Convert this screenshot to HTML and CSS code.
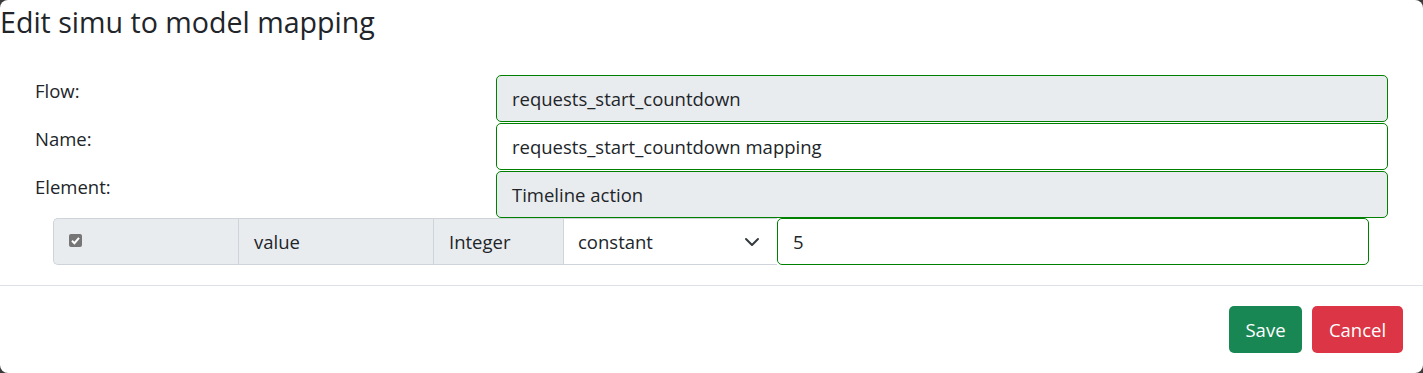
FILE: index.html
```html
<!DOCTYPE html>
<html>
<head>
<meta charset="utf-8">
<link rel="stylesheet" href="styles.css">
</head>
<body>
<div class="modal">
  <div class="modal-header">
    <h3 class="modal-title">Edit simu to model mapping</h3>
  </div>
  <div class="modal-body">
    <div class="form-grid">
      <label class="form-label">Flow:</label>
      <div class="form-control disabled">requests_start_countdown</div>
      <label class="form-label">Name:</label>
      <div class="form-control">requests_start_countdown mapping</div>
      <label class="form-label">Element:</label>
      <div class="form-control disabled">Timeline action</div>
    </div>
    <div class="input-group">
      <span class="ig-text ig-check"><span class="checkbox"><svg viewBox="0 0 13 13" width="13" height="13"><path d="M3 6.8 L5.4 9.2 L10 3.8" fill="none" stroke="#fff" stroke-width="2"/></svg></span></span>
      <span class="ig-text ig-name">value</span>
      <span class="ig-text ig-type">Integer</span>
      <span class="ig-select">constant<svg class="chevron" viewBox="0 0 16 16" width="16" height="16"><path d="M2 5l6 6 6-6" fill="none" stroke="#343a40" stroke-width="2" stroke-linecap="round" stroke-linejoin="round"/></svg></span>
      <span class="ig-input">5</span>
    </div>
  </div>
  <div class="modal-footer">
    <button class="btn btn-success">Save</button>
    <button class="btn btn-danger">Cancel</button>
  </div>
</div>
</body>
</html>
```
FILE: styles.css
```css
html, body {
  margin: 0;
  padding: 0;
  background: #3b3b3b;
}
body {
  font-family: "Open Sans", "Noto Sans", sans-serif;
  color: #212529;
}
.modal {
  width: 1423px;
  height: 373px;
  background: #fff;
  border-radius: 8px;
  box-sizing: border-box;
  display: flex;
  flex-direction: column;
}
.modal-header {
  height: 60px;
  box-sizing: border-box;
  padding-top: 5px;
}
.modal-title {
  margin: 0;
  font-size: 28.6px;
  font-weight: 400;
  line-height: 1.2;
}
.modal-body {
  padding: 15px 0 0 0;
  height: 226px;
  box-sizing: border-box;
  border-bottom: 1px solid #dee2e6;
}
.form-grid {
  display: grid;
  grid-template-columns: 461px 892px;
  row-gap: 1px;
  padding-left: 35px;
}
.form-label {
  font-size: 18.5px;
  line-height: 26px;
  padding-top: 3px;
}
.form-control {
  height: 47px;
  box-sizing: border-box;
  border: 1px solid #008000;
  border-radius: 5px;
  padding: 0 15px;
  font-size: 18.5px;
  display: flex;
  align-items: center;
  background: #fff;
}
.form-control.disabled {
  background: #e9ecef;
}
.input-group {
  margin: 0 0 0 53px;
  width: 1316px;
  height: 47px;
  display: flex;
  font-size: 18.5px;
}
.ig-text {
  background: #e9ecef;
  border: 1px solid #ced4da;
  border-right: none;
  box-sizing: border-box;
  display: flex;
  align-items: center;
  padding: 0 15px;
}
.ig-check {
  width: 185px;
  border-radius: 5px 0 0 5px;
  align-items: flex-start;
  padding-top: 15px;
}
.ig-name { width: 195px; }
.ig-type { width: 130px; }
.checkbox {
  width: 13px;
  height: 13px;
  background: #767676;
  border-radius: 2px;
  display: block;
}
.checkbox svg { display: block; }
.ig-select {
  width: 214px;
  box-sizing: border-box;
  border: 1px solid #ced4da;
  border-right: none;
  display: flex;
  align-items: center;
  justify-content: space-between;
  padding: 0 17px 0 14px;
  background: #fff;
}
.chevron { display: block; }
.ig-input {
  flex: 1;
  box-sizing: border-box;
  border: 1px solid #008000;
  border-radius: 5px;
  display: flex;
  align-items: center;
  padding: 0 15px;
  background: #fff;
}
.modal-footer {
  display: flex;
  justify-content: flex-end;
  gap: 10px;
  padding: 20px 20px 0 0;
}
.btn {
  height: 47px;
  border: none;
  border-radius: 5px;
  color: #fff;
  font-family: "Open Sans", "Noto Sans", sans-serif;
  font-size: 18.5px;
  padding: 0;
}
.btn-success { background: #198754; width: 73px; }
.btn-danger { background: #dc3545; width: 91px; }
```
